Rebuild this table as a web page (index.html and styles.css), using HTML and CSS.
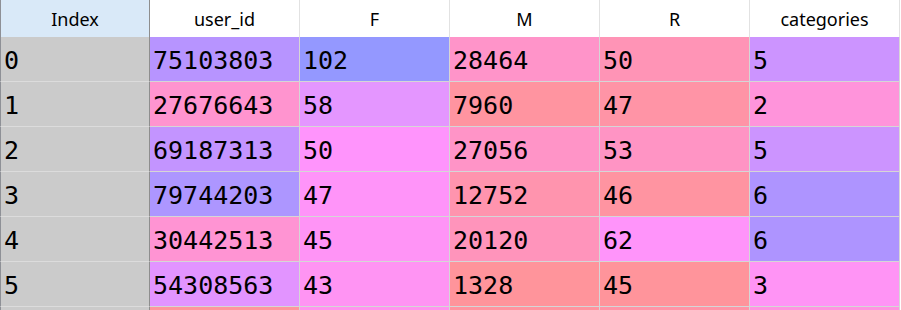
FILE: index.html
```html
<!DOCTYPE html>
<html>
<head>
<meta charset="utf-8">
<link rel="stylesheet" href="styles.css">
</head>
<body>
<div class="table">
  <div class="row head">
    <div class="cell idx">Index</div>
    <div class="cell">user_id</div>
    <div class="cell">F</div>
    <div class="cell">M</div>
    <div class="cell">R</div>
    <div class="cell">categories</div>
  </div>
  <div class="row data">
    <div class="cell idx">0</div>
    <div class="cell" style="background:#b794ff">75103803</div>
    <div class="cell" style="background:#9498ff">102</div>
    <div class="cell" style="background:#ff94c9">28464</div>
    <div class="cell" style="background:#ff94b6">50</div>
    <div class="cell" style="background:#cc94ff">5</div>
  </div>
  <div class="row data">
    <div class="cell idx">1</div>
    <div class="cell" style="background:#ff94cf">27676643</div>
    <div class="cell" style="background:#e496ff">58</div>
    <div class="cell" style="background:#ff94a0">7960</div>
    <div class="cell" style="background:#ff94a6">47</div>
    <div class="cell" style="background:#ff94db">2</div>
  </div>
  <div class="row data">
    <div class="cell idx">2</div>
    <div class="cell" style="background:#c394ff">69187313</div>
    <div class="cell" style="background:#ff94fc">50</div>
    <div class="cell" style="background:#ff94c7">27056</div>
    <div class="cell" style="background:#ff94c4">53</div>
    <div class="cell" style="background:#cc94ff">5</div>
  </div>
  <div class="row data">
    <div class="cell idx">3</div>
    <div class="cell" style="background:#ad96ff">79744203</div>
    <div class="cell" style="background:#ff94f9">47</div>
    <div class="cell" style="background:#ff94ae">12752</div>
    <div class="cell" style="background:#ff94a1">46</div>
    <div class="cell" style="background:#ae94ff">6</div>
  </div>
  <div class="row data">
    <div class="cell idx">4</div>
    <div class="cell" style="background:#ff94d3">30442513</div>
    <div class="cell" style="background:#ff94f6">45</div>
    <div class="cell" style="background:#ff94bb">20120</div>
    <div class="cell" style="background:#ff94fa">62</div>
    <div class="cell" style="background:#ae94ff">6</div>
  </div>
  <div class="row data">
    <div class="cell idx">5</div>
    <div class="cell" style="background:#e294ff">54308563</div>
    <div class="cell" style="background:#ff94f3">43</div>
    <div class="cell" style="background:#ff949b">1328</div>
    <div class="cell" style="background:#ff949b">45</div>
    <div class="cell" style="background:#ff94f5">3</div>
  </div>
  <div class="row data partial">
    <div class="cell idx"></div>
    <div class="cell" style="background:#ff969c"></div>
    <div class="cell" style="background:#ff94ee"></div>
    <div class="cell" style="background:#ff949f"></div>
    <div class="cell" style="background:#ff94a6"></div>
    <div class="cell" style="background:#ff94e0"></div>
  </div>
</div>
</body>
</html>
```
FILE: styles.css
```css
html, body {
  margin: 0;
  padding: 0;
  background: #ffffff;
  overflow: hidden;
}

.table {
  display: flex;
  flex-direction: column;
  width: 900px;
}

.row {
  display: flex;
}

.cell {
  box-sizing: border-box;
  width: 150px;
  flex: none;
  border-right: 1px solid #d6d6d6;
  color: #000000;
}

.head {
  height: 37px;
}

.head .cell {
  display: flex;
  align-items: center;
  justify-content: center;
  padding-top: 1px;
  font-family: "Noto Sans", "Open Sans", sans-serif;
  font-size: 18px;
  border-right-color: #e2e2e2;
  background: #ffffff;
}

.head .cell.idx {
  background: #d9e9f8;
}

.data {
  height: 45px;
}

.data .cell {
  border-bottom: 1px solid #d6d6d6;
  padding: 9px 0 0 3px;
  font-family: "DejaVu Sans Mono", "Liberation Mono", monospace;
  font-size: 25px;
  line-height: 29px;
}

.data.partial {
  height: 3px;
}

.data.partial .cell {
  border-bottom: none;
  padding: 0;
}

.cell.idx {
  border-left: 1px solid #8e9096;
  border-right: 1px solid #8e8e8e;
}

.data .cell.idx {
  background: #cbcbcb;
  border-bottom-color: #dcdcdc;
  padding-left: 3px;
}
```
